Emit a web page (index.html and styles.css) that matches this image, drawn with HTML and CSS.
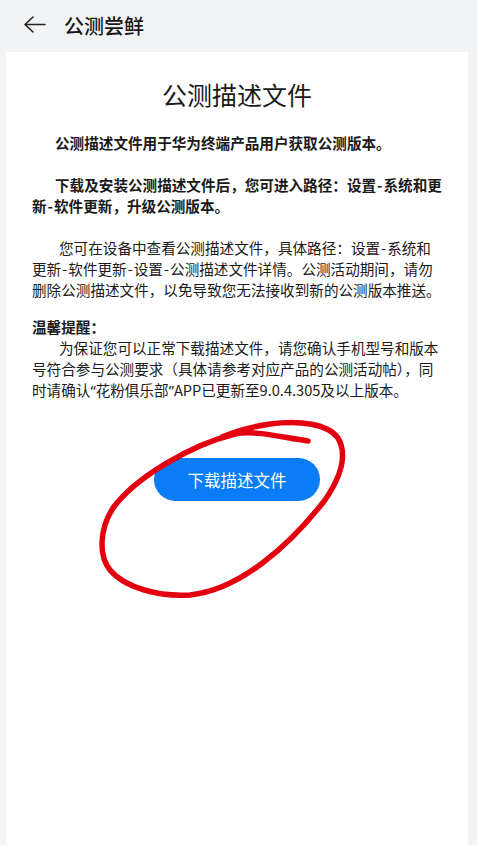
FILE: index.html
```html
<!DOCTYPE html>
<html lang="zh-CN">
<head>
	<meta charset="UTF-8">
	<meta name="viewport" content="width=device-width, initial-scale=1.0">
	<title>公测尝鲜</title>

	<link rel="stylesheet" href="styles.css">

</head>
<body>
	<div class="header">
		<svg class="back" width="24" height="24" viewBox="0 0 24 24">
			<path d="M23 11.5H3M11 4L3 11.5L11 19" fill="none" stroke="#222" stroke-width="1.6" stroke-linecap="round" stroke-linejoin="round"/>
		</svg>
		<div class="headerTitle">公测尝鲜</div>
	</div>

	<div class="card">
		<div class="title">公测描述文件</div>

		<p class="bold indentA">公测描述文件用于华为终端产品用户获取公测版本。</p>

		<p class="bold indentA">下载及安装公测描述文件后，您可进入路径：设置<span class="dash">-</span>系统和更<br>新<span class="dash">-</span>软件更新，升级公测版本。</p>

		<p class="indentB">您可在设备中查看公测描述文件，具体路径：设置<span class="dash">-</span>系统和<br>更新<span class="dash">-</span>软件更新<span class="dash">-</span>设置<span class="dash">-</span>公测描述文件详情。公测活动期间，请勿<br>删除公测描述文件，以免导致您无法接收到新的公测版本推送。</p>

		<div class="tipTitle bold">温馨提醒：</div>
		<p class="indentB tip">为保证您可以正常下载描述文件，请您确认手机型号和版本<br>号符合参与公测要求（具体请参考对应产品的公测活动帖），同<br>时请确认<span class="latin">“</span>花粉俱乐部<span class="latin">”</span>APP已更新至9.0.4.305及以上版本。</p>

		<div class="btnRow">
			<div class="download">下载描述文件</div>
		</div>
	</div>

	<!-- hand drawn red circle over the button -->
	<svg class="scribble" width="477" height="845" viewBox="0 0 477 845">
		<path d="M308 441 C280 437 255 430 235 434 C190 445 135 478 113 508 C100 528 98 555 110 570 C125 588 160 597 190 595 C240 590 290 545 325 500 C340 478 348 455 338 438 C328 424 300 420 270 424 C250 427 238 430 222 437" fill="none" stroke="#e3000f" stroke-width="5.5" stroke-linecap="round" stroke-linejoin="round"/>
	</svg>
</body>
</html>
```

FILE: styles.css
```css
body {
	margin: 0;
	width: 477px;
	height: 845px;
	overflow: hidden;
	background-color: #f1f3f5;
	font-family: "Noto Sans CJK SC", "Noto Sans", sans-serif;
	color: #1a1a1a;
	position: relative;
}

.header {
	height: 50px;
	display: flex;
	align-items: center;
	padding-left: 22px;
}

.back {
	display: block;
	margin-right: 18px;
}

.headerTitle {
	font-size: 20px;
	font-weight: 500;
	color: #191919;
}

.card {
	margin: 2px 9px 0 6px;
	height: 793px;
	background-color: #fff;
	padding: 25px 26px 0 26px;
	box-sizing: border-box;
}

.title {
	font-size: 25px;
	line-height: 34px;
	text-align: center;
	margin-bottom: 21px;
}

p {
	margin: 0 0 21px 0;
	font-size: 14.6px;
	line-height: 21px;
	white-space: nowrap;
}

.bold {
	font-weight: bold;
}

.indentA {
	text-indent: 23px;
}

.indentB {
	text-indent: 27px;
}

.dash {
	padding: 0 1px;
}

.latin {
	font-family: "Noto Sans", sans-serif;
}

.tipTitle {
	font-size: 14.6px;
	line-height: 21px;
	margin-top: -5px;
}

.tip {
	margin-bottom: 0;
}

.btnRow {
	display: flex;
	justify-content: center;
	margin-top: 57px;
}

.download {
	width: 166px;
	height: 43px;
	border-radius: 22px;
	background-color: #0a7cf6;
	color: #fff;
	font-size: 16.5px;
	display: flex;
	align-items: center;
	justify-content: center;
}

.scribble {
	position: absolute;
	left: 0;
	top: 0;
	pointer-events: none;
}
```
